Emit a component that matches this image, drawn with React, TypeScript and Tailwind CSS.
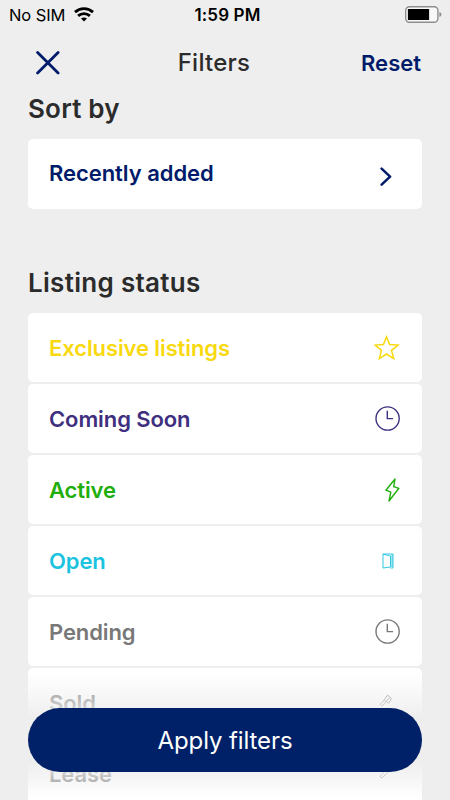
import type { ReactNode } from "react";

type Status = {
  label: string;
  color: string;
  icon: ReactNode;
};

const STATUSES: Status[] = [
  { label: "Exclusive listings", color: "text-[#f8d90f]", icon: <StarIcon /> },
  { label: "Coming Soon", color: "text-[#3f307f]", icon: <ClockIcon /> },
  { label: "Active", color: "text-[#1fae0c]", icon: <BoltIcon /> },
  { label: "Open", color: "text-[#1bc3df]", icon: <DoorIcon /> },
  { label: "Pending", color: "text-[#787878]", icon: <ClockIcon /> },
  { label: "Sold", color: "text-[#808080]", icon: <GavelIcon /> },
  { label: "Lease", color: "text-[#808080]", icon: <KeyIcon /> },
];

export default function App() {
  return (
    <div className="relative flex h-[800px] w-[450px] flex-col overflow-hidden bg-[#eeeeee] font-['Inter',sans-serif] text-[#2b2b2b]">
      <StatusBar />

      <header className="grid h-[65px] shrink-0 grid-cols-[1fr_auto_1fr] items-center pr-[29px] pl-[7px]">
        <button aria-label="Close" className="ml-[29px] w-fit text-[#001b69]">
          <CloseIcon />
        </button>
        <h1 className="pt-px text-center text-[24px] leading-8 font-medium tracking-[0.25px]">Filters</h1>
        <button className="text-right text-[22px] leading-8 font-semibold text-[#001b69]">
          Reset
        </button>
      </header>

      <main className="mt-px flex flex-col px-7">
        <h2 className="h-[43px] text-[26px] leading-[26px] font-semibold tracking-[0.2px]">
          Sort by
        </h2>
        <button className="flex h-[70px] items-center justify-between rounded-[5px] bg-white pr-[30px] pl-[21px] text-[#001b69]">
          <span className="mb-[2px] text-[22px] leading-8 font-semibold tracking-[-0.05px]">
            Recently added
          </span>
          <ChevronIcon />
        </button>

        <h2 className="mt-[61px] h-[43px] text-[26px] leading-[26px] font-semibold tracking-[0.3px]">
          Listing status
        </h2>
        <ul className="flex flex-col gap-[2px]">
          {STATUSES.map((s) => (
            <li
              key={s.label}
              className={`flex h-[69px] shrink-0 items-center justify-between rounded-[5px] bg-white pr-[22px] pl-[21px] ${s.color}`}
            >
              <span className="pt-px text-[22px] leading-8 font-semibold tracking-[-0.1px]">
                {s.label}
              </span>
              {s.icon}
            </li>
          ))}
        </ul>
      </main>

      {/* Pinned action with the list fading out around it */}
      <div className="absolute inset-x-0 bottom-0 flex h-32 flex-col bg-[linear-gradient(to_bottom,#eeeeee00_0%,#eeeeee99_24%,#eeeeee_35%,#eeeeee_70%,#eeeeee99_82%,#eeeeee00_98%)] px-7 pt-9">
        <button className="h-16 rounded-full bg-[#002068] pt-px text-[24px] leading-8 font-normal tracking-[-0.1px] text-white">
          Apply filters
        </button>
      </div>
    </div>
  );
}

function StatusBar() {
  return (
    <div className="grid h-[30px] shrink-0 grid-cols-3 items-center pr-2 pl-[9px] text-black">
      <div className="flex items-center gap-[9px] text-[16.5px] leading-5 tracking-[-0.1px]">
        No SIM
        <WifiIcon />
      </div>
      <div className="pl-1 text-center text-[17px] leading-5 font-semibold tracking-[0.15px]">
        1:59 PM
      </div>
      <div className="flex justify-end">
        <svg className="-mt-px" width="38" height="17" viewBox="0 0 38 17">
          <rect x="1.7" y="0.7" width="32.2" height="15.6" rx="3.8" fill="#f8f8f8" stroke="#8e8e8e" strokeWidth="1.4" />
          <rect x="3.9" y="3" width="21.2" height="11" rx="0.6" fill="#000" />
          <path d="M35.4 6c2.7.7 2.7 4.3 0 5z" fill="#8e8e8e" />
        </svg>
      </div>
    </div>
  );
}

function WifiIcon() {
  return (
    <svg className="-mt-px" width="20" height="15" viewBox="0 0 20 15" fill="none" stroke="#000" strokeWidth="2.9">
      <path d="M1 5.1c5.2-4.7 12.8-4.7 18 0M4.1 8.9c3.4-3 8.4-3 11.8 0" />
      <path d="M10 14.6l-3-3c1.8-1.5 4.2-1.5 6 0z" fill="#000" stroke="none" />
    </svg>
  );
}

function CloseIcon() {
  return (
    <svg width="24" height="24" viewBox="0 0 24 24" fill="none" stroke="currentColor" strokeWidth="2.8" strokeLinecap="round">
      <path d="M1.6 1.6l20.5 20.5M22.1 1.6L1.6 22.1" />
    </svg>
  );
}

function ChevronIcon() {
  return (
    <svg className="mt-[5px]" width="12" height="20" viewBox="0 0 12 20" fill="none" stroke="currentColor" strokeWidth="2.5" strokeLinecap="round" strokeLinejoin="round">
      <path d="M1.6 1.6l8.5 8-8.5 8" />
    </svg>
  );
}

function StarIcon() {
  return (
    <svg width="26" height="26" viewBox="0 0 26 26" fill="none" stroke="currentColor" strokeWidth="1.5">
      <path d="M12.5 1.8l3.1 7.8 8.5.5-6.6 5.3 2.2 8.2-7.2-4.6-7.2 4.6 2.2-8.2L.9 10.1l8.5-.5z" />
    </svg>
  );
}

function ClockIcon() {
  return (
    <svg width="25" height="25" viewBox="0 0 25 25" fill="none" stroke="currentColor" strokeWidth="1.4">
      <circle cx="12.6" cy="12.5" r="11.6" />
      <path d="M12.3 4.8v7.8h5.8" />
    </svg>
  );
}

function BoltIcon() {
  return (
    <svg width="15" height="24" viewBox="0 0 15 24" fill="none" stroke="currentColor" strokeWidth="1.4" strokeLinejoin="round">
      <path d="M10 1L.9 12.2l4.9 2L4 23l9.9-12.7-5.2-1.7z" />
    </svg>
  );
}

function DoorIcon() {
  return (
    <svg className="mr-[6px]" width="12" height="16" viewBox="0 0 12 16" fill="none" stroke="currentColor" strokeWidth="0.9">
      <path d="M1 15V1h10v14H8.5M1 1l7.5 2v11L1 15M10 1.5V14" />
    </svg>
  );
}

function GavelIcon() {
  return (
    <svg className="mr-[7px]" width="14" height="18" viewBox="0 0 14 18" fill="none" stroke="currentColor" strokeWidth="0.9">
      <path d="M8.6 1.2l4 3.4-3 4.8-4.4-3.6zM10.3 4L7 8M5.2 5.8L1 10.5l2 1.6 4-4.4" />
    </svg>
  );
}

function KeyIcon() {
  return (
    <svg className="mr-[9px]" width="12" height="18" viewBox="0 0 12 18" fill="none" stroke="currentColor" strokeWidth="0.9" strokeLinecap="round">
      <path d="M9.5 1.5l-1 6-5 5c-1.5 1-3-.6-1.7-2L7 5" />
    </svg>
  );
}
